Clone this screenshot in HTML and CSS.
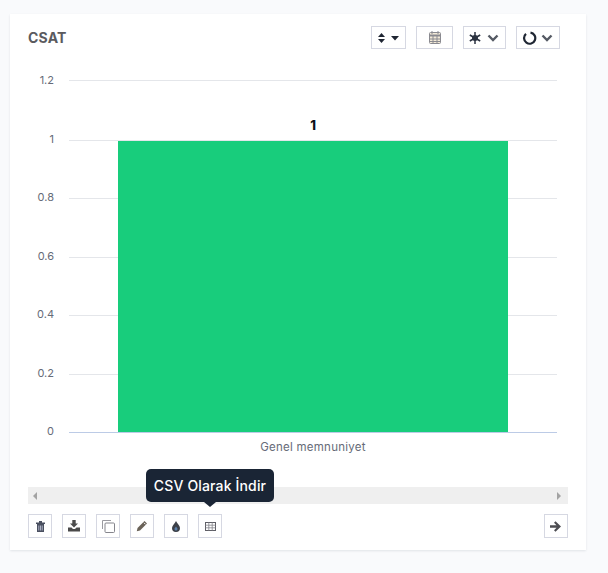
FILE: index.html
```html
<!DOCTYPE html>
<html lang="tr">
<head>
<meta charset="utf-8">
<title>CSAT</title>
<link rel="stylesheet" href="styles.css">
</head>
<body>
<section class="card">
  <header class="head">
    <h2 class="title">CSAT</h2>
    <div class="tools">
      <button class="tool w35"><svg width="23" height="12" viewBox="0 0 23 12"><path class="ic" d="M1 5l3.500-4L8 5zM1 7l3.500 4L8 7zM14 4h8l-4 4.500z"/></svg></button>
      <button class="tool w37"><svg width="12" height="13" viewBox="0 0 12 13"><rect x="0.500" y="1.500" width="11" height="11" rx="1" fill="#f3ead8" stroke="#8a8a90"/><path d="M0 4.500h12" stroke="#8a8a90" stroke-width="2"/><path d="M3 0v3M9 0v3M4 5v7M8 5v7M1 8h10M1 10.500h10" stroke="#8a8a90"/></svg></button>
      <button class="tool w43"><svg width="31" height="12" viewBox="0 0 31 12"><path d="M6 0v12M0.800 3l10.400 6M11.200 3L0.800 9" stroke="#2b3240" stroke-width="1.500"/><circle cx="6" cy="6" r="3" fill="#2b3240"/><path d="M19.500 3.500l4.500 4.500 4.500-4.500" fill="none" stroke="#555a64" stroke-width="2.400"/></svg></button>
      <button class="tool w44"><svg width="32" height="14" viewBox="0 0 32 14"><path d="M8.500 1.600A5.600 5.600 0 1 1 4 2.900" fill="none" stroke="#1f2633" stroke-width="2.200"/><path d="M20.500 4.500l4.500 4.500 4.500-4.500" fill="none" stroke="#555a64" stroke-width="2.400"/></svg></button>
    </div>
  </header>

  <svg class="chart" width="576" height="422" viewBox="0 0 576 422">
    <g class="grid">
      <path d="M59 15.500h488M59 75.500h488M59 133.500h488M59 192.500h488M59 250.500h488M59 309.500h488"/>
    </g>
    <path class="axis" d="M59 367.500h488"/>
    <rect class="bar" x="108" y="76" width="390" height="291"/>
    <g class="ylab">
      <text x="44" y="19">1.2</text>
      <text x="44" y="78">1</text>
      <text x="44" y="136">0.8</text>
      <text x="44" y="195">0.6</text>
      <text x="44" y="253">0.4</text>
      <text x="44" y="312">0.2</text>
      <text x="44" y="370">0</text>
    </g>
    <text class="val" x="303" y="65">1</text>
    <text class="xlab" x="303" y="386">Genel memnuniyet</text>
  </svg>

  <div class="scroll">
    <svg width="6" height="8" viewBox="0 0 6 8"><path class="sc" d="M5 0v8L1 4z"/></svg>
    <svg width="6" height="8" viewBox="0 0 6 8"><path class="sc" d="M1 0v8l4-4z"/></svg>
  </div>

  <footer class="foot">
    <div class="left">
      <button class="sq"><svg width="9" height="11" viewBox="0 0 9 11"><path d="M0 1.500h9V3H0zM3 0h3v1.500H3z" fill="#4a5060"/><path d="M1 3h7v8H1z" fill="#4a5060"/><path d="M2.800 4.500v5M4.500 4.500v5M6.200 4.500v5" stroke="#c7cbe0" stroke-width=".8"/></svg></button>
      <button class="sq"><svg width="12" height="12" viewBox="0 0 12 12"><path d="M4.300 0h3.400v3.500H10L6 7.500 2 3.500h2.300z" fill="#4a4a4a"/><path d="M0 7.500h3.500L5 9h2l1.500-1.500H12V11.500H0z" fill="#4a4a4a"/></svg></button>
      <button class="sq"><svg width="13" height="13" viewBox="0 0 13 13"><path d="M.5 9V.5H9" fill="none" stroke="#9a9aa0"/><rect x="3" y="3" width="9.500" height="9.500" rx="1" fill="#fff" stroke="#85858c"/></svg></button>
      <button class="sq"><svg width="12" height="12" viewBox="0 0 12 12"><path d="M8.500 1l2.500 2.500-7 7L.8 11.300 1.500 8z" fill="#6a6258"/><path d="M8 2.800l1.500 1.500" stroke="#fff"/></svg></button>
      <button class="sq"><svg width="8" height="11" viewBox="0 0 8 11"><path d="M4 0c1 2.500 4 4.500 4 7a4 4 0 0 1-8 0C0 4.500 3 2.500 4 0z" fill="#3c4048"/><path d="M4 5.500c.6 1 1.500 1.700 1.500 2.400a1.500 1.500 0 0 1-3 0C2.500 7.200 3.400 6.500 4 5.500z" fill="#5b7fa8"/></svg></button>
      <button class="sq"><svg width="11" height="9" viewBox="0 0 11 9"><rect x=".5" y=".5" width="10" height="8" fill="#fff" stroke="#5f5f66"/><path d="M.5 3.200h10M.5 5.800h10M3.800 .5v8M7.200 .5v8" stroke="#85858c" stroke-width=".8"/></svg></button>
    </div>
    <button class="sq"><svg width="12" height="11" viewBox="0 0 12 11"><path d="M0 4.300h6.500L4 1.800 5.500 0.300 11 5.500 5.500 10.700 4 9.200l2.500-2.500H0z" fill="#4d4d52"/></svg></button>
  </footer>

  <div class="tip">CSV Olarak İndir</div>
</section>
</body>
</html>
```

FILE: styles.css
```css
* { box-sizing: border-box; }
html, body { margin: 0; }
body {
  width: 608px;
  height: 573px;
  background: #f9fafc;
  padding: 14px 22px 0 10px;
  font-family: "Inter", "Open Sans", sans-serif;
  overflow: hidden;
}
.card {
  position: relative;
  width: 576px;
  height: 536px;
  background: #fff;
  box-shadow: 0 1px 2px rgba(60, 70, 90, 0.12);
  padding: 12px 18px;
}
.head {
  display: flex;
  justify-content: space-between;
  align-items: center;
  height: 23px;
  margin-right: 8px;
}
.title {
  margin: 0;
  font-size: 14px;
  font-weight: 700;
  color: #5a5a5e;
  letter-spacing: 0.2px;
}
.tools { display: flex; gap: 10px; }
.tool, .sq {
  display: flex;
  align-items: center;
  justify-content: center;
  padding: 0;
  background: #fff;
  border: 1px solid #d6d8e2;
  border-radius: 0;
}
.tool { height: 23px; }
.w35 { width: 35px; }
.w37 { width: 37px; }
.w43 { width: 43px; }
.w44 { width: 44px; }
.ic { fill: #1f2633; }
.chart { display: block; margin: 16px -18px 0; }
.grid path { stroke: #e4e6ea; stroke-width: 1; fill: none; }
.axis { stroke: #bccbe6; stroke-width: 1; fill: none; }
.bar { fill: #18cd7c; }
.ylab text {
  font-size: 11px;
  fill: #666b78;
  text-anchor: end;
}
.val {
  font-size: 13px;
  font-weight: 800;
  fill: #0d0f18;
  text-anchor: middle;
}
.xlab {
  font-size: 11.500px;
  letter-spacing: 0.25px;
  fill: #666b78;
  text-anchor: middle;
}
.scroll {
  display: flex;
  justify-content: space-between;
  align-items: center;
  height: 17px;
  padding: 0 6px 0 4px;
  background: #efefef;
}
.sc { fill: #a3a3a3; }
.foot {
  display: flex;
  justify-content: space-between;
  margin-top: 10px;
}
.left { display: flex; gap: 10px; }
.sq { width: 24px; height: 24px; }
.tip {
  position: absolute;
  left: 136px;
  top: 455px;
  width: 128px;
  height: 33px;
  background: #1a2535;
  color: #fff;
  border-radius: 5px;
  font-size: 14px;
  font-weight: 500;
  letter-spacing: 0.15px;
  line-height: 33px;
  text-align: center;
}
.tip::after {
  content: "";
  position: absolute;
  left: 58px;
  top: 33px;
  border: 6px solid transparent;
  border-top: 5px solid #1a2535;
  border-bottom: 0;
}
```
